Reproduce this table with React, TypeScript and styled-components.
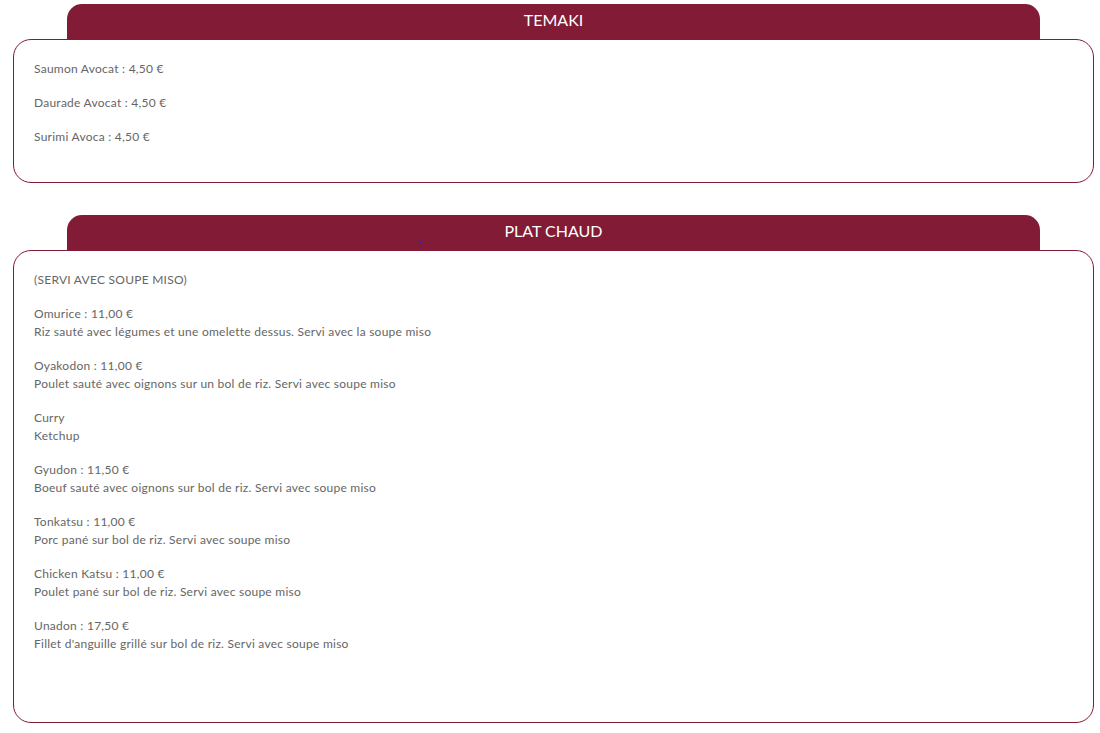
import React from "react";
import styled, { createGlobalStyle } from "styled-components";

const Global = createGlobalStyle`
  html, body { margin: 0; padding: 0; background: #fff; }
  body { font-family: Lato, "Open Sans", sans-serif; }
`;

const Page = styled.div`
  display: flex;
  flex-direction: column;
  gap: 32px;
  padding: 4px 6px 10px 13px;
`;

const Section = styled.section`
  display: flex;
  flex-direction: column;
`;

const Tab = styled.div`
  position: relative;
  margin: 0 54px;
  height: 35px;
  box-sizing: border-box;
  padding-bottom: 4px;
  background: #821b35;
  border-radius: 15px 15px 0 0;
  display: flex;
  align-items: center;
  justify-content: center;
  color: #fff;
  font-family: Lato, sans-serif;
  font-size: 16px;
`;

const Dot = styled.span`
  position: absolute;
  left: 352px;
  top: 27px;
  width: 2px;
  height: 2px;
  background: #2020ff;
`;

const Card = styled.div<{ $bottom: number }>`
  border: 1px solid #821b35;
  border-radius: 18px;
  padding: 20px 20px ${(p) => p.$bottom}px 20px;
  display: flex;
  flex-direction: column;
  gap: 16px;
  color: #666;
  font-family: Lato, sans-serif;
  font-weight: 400;
  font-size: 12px;
  letter-spacing: 0.25px;
  line-height: 18px;
`;

const Item = styled.p`
  margin: 0;
`;

const temaki = ["Saumon Avocat : 4,50 €", "Daurade Avocat : 4,50 €", "Surimi Avoca : 4,50 €"];

const plats: string[][] = [
  ["(SERVI AVEC SOUPE MISO)"],
  ["Omurice : 11,00 €", "Riz sauté avec légumes et une omelette dessus. Servi avec la soupe miso"],
  ["Oyakodon : 11,00 €", "Poulet sauté avec oignons sur un bol de riz. Servi avec soupe miso"],
  ["Curry", "Ketchup"],
  ["Gyudon : 11,50 €", "Boeuf sauté avec oignons sur bol de riz. Servi avec soupe miso"],
  ["Tonkatsu : 11,00 €", "Porc pané sur bol de riz. Servi avec soupe miso"],
  ["Chicken Katsu : 11,00 €", "Poulet pané sur bol de riz. Servi avec soupe miso"],
  ["Unadon : 17,50 €", "Fillet d'anguille grillé sur bol de riz. Servi avec soupe miso"],
];

export default function App() {
  return (
    <>
      <Global />
      <Page>
        <Section>
          <Tab>TEMAKI</Tab>
          <Card $bottom={36}>
            {temaki.map((t) => (
              <Item key={t}>{t}</Item>
            ))}
          </Card>
        </Section>
        <Section>
          <Tab>
            PLAT CHAUD
            <Dot />
          </Tab>
          <Card $bottom={69}>
            {plats.map((lines, i) => (
              <Item key={i}>
                {lines.map((l, j) => (
                  <React.Fragment key={j}>
                    {j > 0 && <br />}
                    {l}
                  </React.Fragment>
                ))}
              </Item>
            ))}
          </Card>
        </Section>
      </Page>
    </>
  );
}
